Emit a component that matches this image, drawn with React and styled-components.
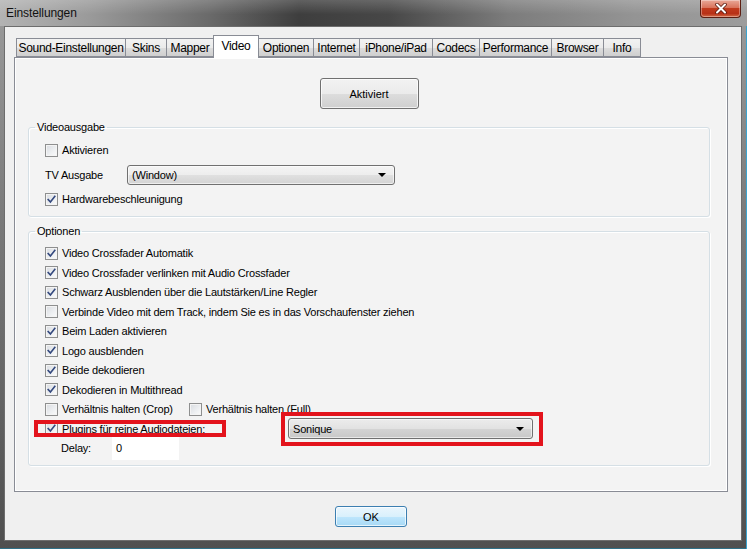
import React from 'react'
import styled, { createGlobalStyle } from 'styled-components'

const GlobalStyle = createGlobalStyle`
  html, body {
    margin: 0;
    padding: 0;
    background: #f0f0f0;
  }
  * {
    box-sizing: border-box;
  }
`;

const uiFont = `"Liberation Sans", Arial, sans-serif`;

const Window = styled.div`
  width: 747px;
  height: 549px;
  display: flex;
  flex-direction: column;
  background: linear-gradient(180deg, #9c9c9c 0%, #7a7a7a 40%, #4f4f4f 100%);
  box-shadow: inset -1px 0 #3aa3cf, inset 0 -1px #2f6f86;
  font-family: ${uiFont};
  font-size: 11px;
  letter-spacing: -0.2px;
  color: #000;
`;

const TitleBar = styled.div`
  height: 26px;
  flex: none;
  display: flex;
  align-items: flex-start;
  padding-left: 6px;
  background:
    linear-gradient(180deg, rgba(255,255,255,0.18) 0%, rgba(255,255,255,0) 55%),
    linear-gradient(90deg, #b3b3b3 0%, #9a9a9a 12%, #6a6a6a 28%, #3e3e3e 40%, #474747 52%, #7c7c7c 68%, #949494 85%, #9d9d9d 100%);
`;

const Title = styled.span`
  margin-top: 6px;
  font-size: 12px;
  color: #111;
  letter-spacing: -0.1px;
`;

const CloseButton = styled.div`
  margin-left: auto;
  margin-right: 6px;
  width: 41px;
  height: 18px;
  display: flex;
  align-items: center;
  justify-content: center;
  border: 1px solid #5c1e12;
  border-top: none;
  border-radius: 0 0 4px 4px;
  background: linear-gradient(180deg, #e9a898 0%, #d9735c 45%, #c13a1d 50%, #b83117 80%, #d26a45 100%);
  box-shadow: inset 0 0 0 1px rgba(255,255,255,0.35);
`;

const Client = styled.div`
  flex: 1;
  margin: 0 5px 8px 4px;
  border: 1px solid #6d6d6d;
  background: #f0f0f0;
  padding: 8px 13px 0 9px;
  display: flex;
  flex-direction: column;
`;

const TabStrip = styled.div`
  height: 22px;
  display: flex;
  align-items: flex-end;
  padding-left: 2px;
  position: relative;
  z-index: 1;
`;

const Tab = styled.div`
  width: ${p => p.w}px;
  height: ${p => (p.active ? 23 : 19)}px;
  margin-right: -1px;
  margin-bottom: ${p => (p.active ? -1 : 0)}px;
  display: flex;
  align-items: ${p => (p.active ? 'flex-start' : 'center')};
  justify-content: center;
  padding-top: ${p => (p.active ? 3 : 1)}px;
  border: 1px solid #898c95;
  border-bottom: ${p => (p.active ? 'none' : '1px solid #898c95')};
  background: ${p => (p.active
    ? '#ffffff'
    : 'linear-gradient(180deg, #f2f2f2 0%, #ebebeb 50%, #dddddd 51%, #cfcfcf 100%)')};
  font-size: 12px;
  letter-spacing: -0.3px;
  color: #000;
  white-space: nowrap;
  position: relative;
  z-index: ${p => (p.active ? 2 : 1)};
`;

const Panel = styled.div`
  height: 435px;
  border: 1px solid #898c95;
  background: #f3f3f3;
  box-shadow: inset 1px 1px #ffffff, inset -1px -1px #ffffff;
  padding: 20px 17px 0 13px;
  display: flex;
  flex-direction: column;
`;

const CenterRow = styled.div`
  display: flex;
  justify-content: center;
  padding-top: ${p => p.top || 0}px;
`;

const PushButton = styled.button`
  width: ${p => p.w}px;
  height: ${p => p.h}px;
  font-family: ${uiFont};
  font-size: 11px;
  color: #000;
  border: 1px solid ${p => (p.primary ? '#3c7fb1' : '#707070')};
  border-radius: 3px;
  padding: 0;
  background: ${p => (p.primary
    ? 'linear-gradient(180deg, #eaf6fd 0%, #d9f0fc 50%, #bee6fd 51%, #a7d9f5 100%)'
    : 'linear-gradient(180deg, #f2f2f2 0%, #ebebeb 50%, #dddddd 51%, #cfcfcf 100%)')};
  box-shadow: inset 0 0 0 1px rgba(255,255,255,0.7);
`;

const Group = styled.fieldset`
  margin: ${p => p.top || 0}px 0 0 0;
  padding: ${p => p.pt}px 16px ${p => p.pb}px 16px;
  border: 1px solid #d5dfe5;
  border-radius: 3px;
  box-shadow: inset 1px 1px #ffffff, 1px 1px #ffffff;
  min-width: 0;
`;

const Legend = styled.legend`
  padding: 0 2px;
  margin-left: -10px;
  line-height: 14px;
  font-size: 11px;
  color: #000;
`;

const Rows = styled.div`
  display: flex;
  flex-direction: column;
  gap: ${p => p.gap || 0}px;
`;

const Row = styled.div`
  height: ${p => p.h || 19.5}px;
  display: flex;
  align-items: center;
`;

const CheckLabel = styled.label`
  display: flex;
  align-items: center;
  gap: 4px;
  white-space: nowrap;
  width: ${p => (p.w ? `${p.w}px` : 'auto')};
  flex: none;
`;

const Box = styled.span`
  width: 13px;
  height: 13px;
  flex: none;
  border: 1px solid #8e8f8f;
  background: linear-gradient(135deg, #d8dbe0 0%, #eef0f2 60%, #fbfbfb 100%);
  box-shadow: inset 0 0 0 1px #f4f4f4;
  display: flex;
  align-items: center;
  justify-content: center;
`;

const FieldLabel = styled.span`
  width: ${p => p.w}px;
  flex: none;
  padding-left: ${p => p.indent || 0}px;
`;

const Combo = styled.div`
  width: ${p => p.w}px;
  height: ${p => p.h}px;
  margin-left: ${p => p.ml || 0}px;
  flex: none;
  border: 1px solid #707070;
  border-radius: 3px;
  background: ${p => (p.dark
    ? 'linear-gradient(180deg, #ececec 0%, #e2e2e2 50%, #d4d4d4 51%, #c8c8c8 100%)'
    : 'linear-gradient(180deg, #f4f4f4 0%, #ededed 50%, #e0e0e0 51%, #d3d3d3 100%)')};
  box-shadow: inset 0 0 0 1px rgba(255,255,255,0.6);
  display: flex;
  align-items: center;
  padding: 0 8px 0 4px;
`;

const ComboText = styled.span`
  flex: 1;
`;

const Arrow = styled.span`
  width: 0;
  height: 0;
  border-left: 4px solid transparent;
  border-right: 4px solid transparent;
  border-top: 4px solid #000;
`;

const Highlight = styled.div`
  position: relative;
  display: flex;
  align-items: center;
  flex: none;
  width: ${p => (p.w ? `${p.w}px` : 'auto')};
  margin-left: ${p => p.ml || 0}px;
  &::after {
    content: '';
    position: absolute;
    top: ${p => p.t}px;
    right: ${p => p.r}px;
    bottom: ${p => p.b}px;
    left: ${p => p.l}px;
    border: 4px solid #e3131c;
    pointer-events: none;
  }
`;

const TextField = styled.div`
  width: 67px;
  height: 23px;
  background: #ffffff;
  padding-left: 4px;
  display: flex;
  align-items: center;
`;

const tabs = [
  ['Sound-Einstellungen', 110],
  ['Skins', 42],
  ['Mapper', 48],
  ['Video', 46, true],
  ['Optionen', 56],
  ['Internet', 47],
  ['iPhone/iPad', 74],
  ['Codecs', 48],
  ['Performance', 73],
  ['Browser', 53],
  ['Info', 38],
];

const Check = ({ checked }) => (
  <Box>
    {checked && (
      <svg width="9" height="9" viewBox="0 0 9 9">
        <path d="M1.2 4.6 L3.4 7 L7.8 1.4" fill="none" stroke="#34497e" strokeWidth="1.6" strokeLinecap="square" />
      </svg>
    )}
  </Box>
);

const Option = ({ checked, children, w }) => (
  <CheckLabel w={w}>
    <Check checked={checked} />
    <span>{children}</span>
  </CheckLabel>
);

const options = [
  ['Video Crossfader Automatik', true],
  ['Video Crossfader verlinken mit Audio Crossfader', true],
  ['Schwarz Ausblenden über die Lautstärken/Line Regler', true],
  ['Verbinde Video mit dem Track, indem Sie es in das Vorschaufenster ziehen', false],
  ['Beim Laden aktivieren', true],
  ['Logo ausblenden', true],
  ['Beide dekodieren', true],
  ['Dekodieren in Multithread', true],
];

export default function App() {
  return (
    <>
      <GlobalStyle />
      <Window>
        <TitleBar>
          <Title>Einstellungen</Title>
          <CloseButton>
            <svg width="14" height="11" viewBox="0 0 14 11">
              <path d="M3 1.5 L11 9.5 M11 1.5 L3 9.5" stroke="#5a1a10" strokeWidth="3.6" strokeLinecap="round" />
              <path d="M3 1.5 L11 9.5 M11 1.5 L3 9.5" stroke="#ffffff" strokeWidth="2" strokeLinecap="round" />
            </svg>
          </CloseButton>
        </TitleBar>
        <Client>
          <TabStrip>
            {tabs.map(([label, w, active]) => (
              <Tab key={label} w={w} active={active}>{label}</Tab>
            ))}
          </TabStrip>
          <Panel>
            <CenterRow>
              <PushButton w={99} h={31}>Aktiviert</PushButton>
            </CenterRow>

            <Group top={11} pt={6} pb={7}>
              <Legend>Videoausgabe</Legend>
              <Rows gap={4.5}>
                <Row h={20}>
                  <Option checked={false}>Aktivieren</Option>
                </Row>
                <Row h={20}>
                  <FieldLabel w={82}>TV Ausgabe</FieldLabel>
                  <Combo w={268} h={20}>
                    <ComboText>(Window)</ComboText>
                    <Arrow />
                  </Combo>
                </Row>
                <Row h={20}>
                  <Option checked>Hardwarebeschleunigung</Option>
                </Row>
              </Rows>
            </Group>

            <Group top={7} pt={5.5} pb={6.5}>
              <Legend>Optionen</Legend>
              <Rows>
                {options.map(([label, checked]) => (
                  <Row key={label}>
                    <Option checked={checked}>{label}</Option>
                  </Row>
                ))}
                <Row>
                  <Option checked={false} w={144}>Verhältnis halten (Crop)</Option>
                  <Option checked={false}>Verhältnis halten (Full)</Option>
                </Row>
                <Row>
                  <Highlight w={181} t={-2} r={0} b={-2} l={-11}>
                    <Option checked>Plugins für reine Audiodateien:</Option>
                  </Highlight>
                  <Highlight ml={62} t={-6} r={-10} b={-7} l={-7}>
                    <Combo w={245} h={21} dark>
                      <ComboText>Sonique</ComboText>
                      <Arrow />
                    </Combo>
                  </Highlight>
                </Row>
                <Row>
                  <FieldLabel w={67} indent={16}>Delay:</FieldLabel>
                  <TextField>0</TextField>
                </Row>
              </Rows>
            </Group>
          </Panel>
          <CenterRow top={14}>
            <PushButton w={72} h={21} primary>OK</PushButton>
          </CenterRow>
        </Client>
      </Window>
    </>
  );
}
